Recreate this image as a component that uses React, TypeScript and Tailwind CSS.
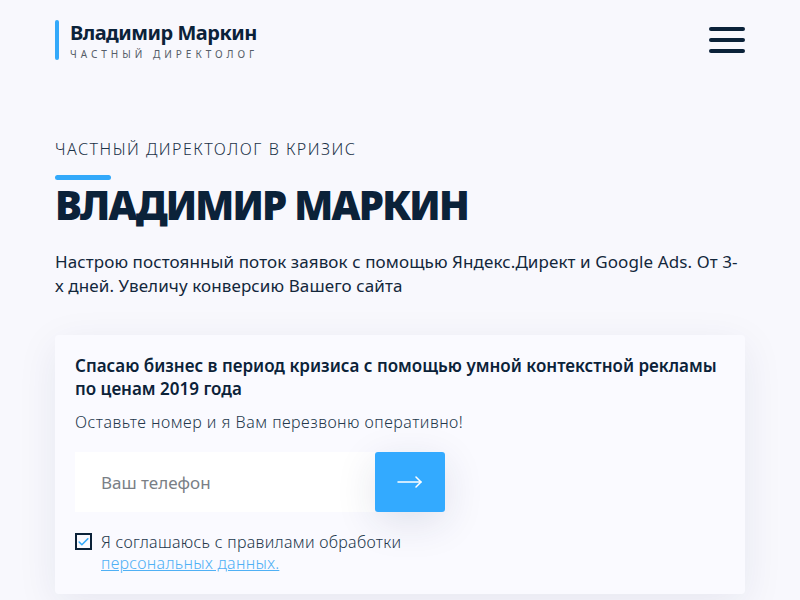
import { Check } from "lucide-react";

const FONT = "font-['Noto_Sans','Open_Sans',sans-serif]";

export default function App() {
    return (
        <div className={`min-h-screen w-full bg-[#f8f8fd] text-[#0b2239] ${FONT}`}>
            <header className="flex items-center justify-between px-[55px] pt-5">
                <div className="flex items-stretch gap-[11px]">
                    <div className="w-1 h-10 rounded-full bg-[#33a9fa]" />
                    <div className="flex flex-col justify-center">
                        <div className="text-[20px] leading-6 font-bold tracking-tight">Владимир Маркин</div>
                        <div className="mt-[3px] text-[10px] leading-3 tracking-[4px] text-[#555d68]">
                            ЧАСТНЫЙ ДИРЕКТОЛОГ
                        </div>
                    </div>
                </div>
                <button type="button" className="flex flex-col gap-[7px] w-9">
                    <span className="block h-1 rounded-full bg-[#0b2239]" />
                    <span className="block h-1 rounded-full bg-[#0b2239]" />
                    <span className="block h-1 rounded-full bg-[#0b2239]" />
                </button>
            </header>

            <main className="px-[55px] pt-[79px]">
                <p className="text-[16px] leading-5 font-light tracking-[1.5px] text-[#1c3247]">
                    ЧАСТНЫЙ ДИРЕКТОЛОГ В КРИЗИС
                </p>
                <div className="mt-4 h-[5px] w-14 rounded-full bg-[#33a9fa]" />
                <h1 className="mt-[5px] text-[40px] leading-[40px] font-black tracking-[-1.8px]">
                    ВЛАДИМИР МАРКИН
                </h1>
                <p className="mt-[25px] text-[17px] leading-6 tracking-[0.1px] text-[#13273b]">
                    Настрою постоянный поток заявок с помощью Яндекс.Директ и Google Ads. От 3-х дней. Увеличу конверсию Вашего сайта
                </p>

                <section className="mt-[37px] rounded bg-[#fafaff] px-5 pt-[19px] pb-5 shadow-[0_10px_40px_rgba(30,40,90,0.08)]">
                    <h2 className="text-[17px] leading-[23px] font-semibold">
                        Спасаю бизнес в период кризиса с помощью умной контекстной рекламы по ценам 2019 года
                    </h2>
                    <p className="mt-[12px] text-[16px] leading-5 font-light tracking-[0.5px] text-[#24384c]">
                        Оставьте номер и я Вам перезвоню оперативно!
                    </p>
                    <div className="mt-[20px] flex">
                        <input
                            type="text"
                            placeholder="Ваш телефон"
                            className="h-[60px] w-[300px] bg-white pl-[26px] text-[17px] outline-none placeholder:text-[#7a7f86]"
                        />
                        <button
                            type="button"
                            className="flex h-[60px] w-[70px] items-center justify-center rounded-[3px] bg-[#33aaff] text-white shadow-[0_10px_40px_rgba(30,40,90,0.12)]"
                        >
                            <svg width="26" height="12" viewBox="0 0 26 12" fill="none" stroke="currentColor" strokeWidth="1.5" strokeLinecap="round" strokeLinejoin="round">
                                <path d="M1 6h23" />
                                <path d="M19 1l5 5-5 5" />
                            </svg>
                        </button>
                    </div>
                    <label className="mt-[20px] flex items-start gap-[9px] text-[16px] leading-[21px] font-light tracking-[0.3px] text-[#24384c]">
                        <span className="mt-[1px] flex h-[17px] w-[17px] shrink-0 items-center justify-center border-2 border-[#0b2239] text-[#33a9fa]">
                            <Check size={14} strokeWidth={3} />
                        </span>
                        <span>
                            Я соглашаюсь с правилами обработки
                            <br />
                            <a href="#" className="text-[#4fb0f5] underline">
                                персональных данных.
                            </a>
                        </span>
                    </label>
                </section>
            </main>
        </div>
    );
}
